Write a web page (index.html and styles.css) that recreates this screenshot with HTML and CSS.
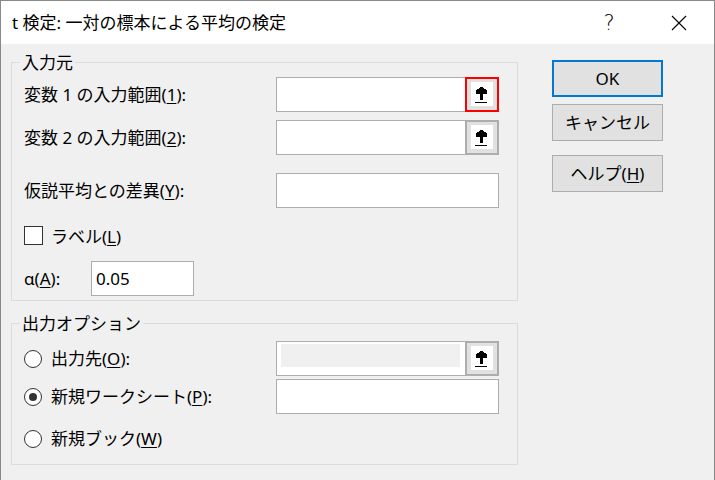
FILE: index.html
```html
<!DOCTYPE html>
<html lang="ja">
<head>
<meta charset="utf-8">
<title>t 検定</title>
<link rel="stylesheet" href="styles.css">
</head>
<body>
<div class="window">
  <div class="titlebar">
    <div class="title">t 検定: 一対の標本による平均の検定</div>
    <div class="tb-btn help">?</div>
    <div class="tb-btn close">
      <svg width="16" height="16" viewBox="0 0 16 16"><path d="M1 1 L15 15 M15 1 L1 15" stroke="#000" stroke-width="1.1" fill="none"/></svg>
    </div>
  </div>
  <div class="body">
    <div class="groups">
      <fieldset class="group group-input">
        <legend>入力元</legend>
        <div class="row">
          <span class="label">変数 1 の入力範囲(<u>1</u>):</span>
          <div class="field">
            <div class="refbtn focus"><span class="refface"><svg width="22" height="24" viewBox="0 0 22 24" shape-rendering="crispEdges"><path d="M9 5H12V6H13V7H15V8H16V12H12V18H9V12H5V8H6V7H8V6H9Z" fill="#000"/><rect x="4" y="20" width="12" height="1" fill="#000"/></svg></span></div>
          </div>
        </div>
        <div class="row r2">
          <span class="label">変数 2 の入力範囲(<u>2</u>):</span>
          <div class="field">
            <div class="refbtn"><span class="refface"><svg width="22" height="24" viewBox="0 0 22 24" shape-rendering="crispEdges"><path d="M9 5H12V6H13V7H15V8H16V12H12V18H9V12H5V8H6V7H8V6H9Z" fill="#000"/><rect x="4" y="20" width="12" height="1" fill="#000"/></svg></span></div>
          </div>
        </div>
        <div class="row r3">
          <span class="label">仮説平均との差異(<u>Y</u>):</span>
          <div class="field"></div>
        </div>
        <div class="row rcheck">
          <span class="check"></span>
          <span>ラベル(<u>L</u>)</span>
        </div>
        <div class="row ralpha">
          <span class="label alpha-label">α(<u>A</u>):</span>
          <div class="alpha-input">0.05</div>
        </div>
      </fieldset>
      <fieldset class="group group-output">
        <legend>出力オプション</legend>
        <div class="row">
          <span class="label"><span class="radio"></span>出力先(<u>O</u>):</span>
          <div class="field">
            <div class="disabled-fill"></div>
            <div class="refbtn"><span class="refface"><svg width="22" height="24" viewBox="0 0 22 24" shape-rendering="crispEdges"><path d="M9 5H12V6H13V7H15V8H16V12H12V18H9V12H5V8H6V7H8V6H9Z" fill="#000"/><rect x="4" y="20" width="12" height="1" fill="#000"/></svg></span></div>
          </div>
        </div>
        <div class="row o2">
          <span class="label"><span class="radio checked"><span class="dot"></span></span>新規ワークシート(<u>P</u>):</span>
          <div class="field"></div>
        </div>
        <div class="row o3">
          <span class="label"><span class="radio"></span>新規ブック(<u>W</u>)</span>
        </div>
      </fieldset>
    </div>
    <div class="buttons">
      <div class="btn default">OK</div>
      <div class="btn cancel">キャンセル</div>
      <div class="btn helpbtn">ヘルプ(<u>H</u>)</div>
    </div>
  </div>
</div>
</body>
</html>
```
FILE: styles.css
```css
* { box-sizing: border-box; }
html, body { margin: 0; padding: 0; }
body {
  width: 715px;
  height: 480px;
  overflow: hidden;
  background: #f0f0f0;
  font-family: "Noto Sans", "Noto Sans CJK JP", sans-serif;
  font-size: 17px;
  color: #000;
}
u { text-underline-offset: 2px; }
.window {
  width: 715px;
  height: 480px;
  border: 1px solid #888;
  border-bottom: none;
  display: flex;
  flex-direction: column;
  background: #f0f0f0;
}
.titlebar {
  height: 43px;
  flex: none;
  background: #fff;
  display: flex;
  align-items: center;
}
.title {
  flex: 1;
  padding-left: 11px;
  line-height: 21px;
  white-space: nowrap;
}
.tb-btn {
  width: 70px;
  height: 43px;
  display: flex;
  align-items: center;
  justify-content: center;
}
.help { font-size: 21px; font-weight: 300; font-family: "DejaVu Sans", sans-serif; }
.body {
  display: flex;
  align-items: flex-start;
  padding: 8px 0 0 10px;
}
.groups {
  width: 507px;
  flex: none;
  display: flex;
  flex-direction: column;
}
fieldset.group {
  margin: 0;
  min-width: 0;
  border: 1px solid #dcdcdc;
  padding: 4px 18px 4px 12px;
}
legend {
  padding: 0 2px;
  margin-left: -4px;
  line-height: 21px;
}
.group-output {
  margin-top: 12px !important;
  padding-top: 7px !important;
  padding-bottom: 15px !important;
}
.row {
  display: flex;
  align-items: center;
  height: 35px;
}
.r2 { margin-top: 8px; }
.r3 { margin-top: 18px; }
.rcheck { margin-top: 17px; height: 21px; }
.ralpha { margin-top: 15px; }
.o2 { margin-top: 3px; }
.o3 { margin-top: 14px; height: 21px; }
.label {
  width: 252px;
  flex: none;
  line-height: 21px;
  white-space: nowrap;
  display: flex;
  align-items: center;
}
.alpha-label { width: 67px; }
.field {
  width: 223px;
  height: 35px;
  flex: none;
  background: #fff;
  border: 1px solid #adadad;
  display: flex;
  align-items: flex-start;
}
.refbtn {
  width: 34px;
  height: 35px;
  flex: none;
  margin: -1px -1px -1px auto;
  border: 2px solid #adadad;
  background: #e1e1e1;
  padding: 3px 4px 4px 4px;
}
.refbtn.focus { border-color: #ff0000; }
.refface {
  display: block;
  width: 22px;
  height: 24px;
  background: #fff;
}
.refface svg { display: block; }
.disabled-fill {
  width: 179px;
  height: 23px;
  margin: 2px 0 0 4px;
  background: #f0f0f0;
}
.check {
  width: 19px;
  height: 19px;
  flex: none;
  border: 1px solid #333;
  background: #fff;
  margin-right: 8px;
}
.alpha-input {
  width: 103px;
  height: 35px;
  flex: none;
  border: 1px solid #adadad;
  background: #fff;
  padding-left: 4px;
  display: flex;
  align-items: center;
}
.radio {
  width: 18px;
  height: 18px;
  flex: none;
  border-radius: 50%;
  border: 1px solid #333;
  background: #fff;
  margin-right: 9px;
  display: flex;
  align-items: center;
  justify-content: center;
}
.dot {
  width: 8px;
  height: 8px;
  border-radius: 50%;
  background: #333;
}
.buttons {
  margin: 8px 0 0 34px;
  display: flex;
  flex-direction: column;
}
.btn {
  width: 111px;
  height: 37px;
  background: #e1e1e1;
  border: 1px solid #adadad;
  display: flex;
  align-items: center;
  justify-content: center;
  line-height: 21px;
}
.btn.default { border: 2px solid #0078d7; }
.cancel { margin-top: 7px; }
.helpbtn { margin-top: 14px; }
```
